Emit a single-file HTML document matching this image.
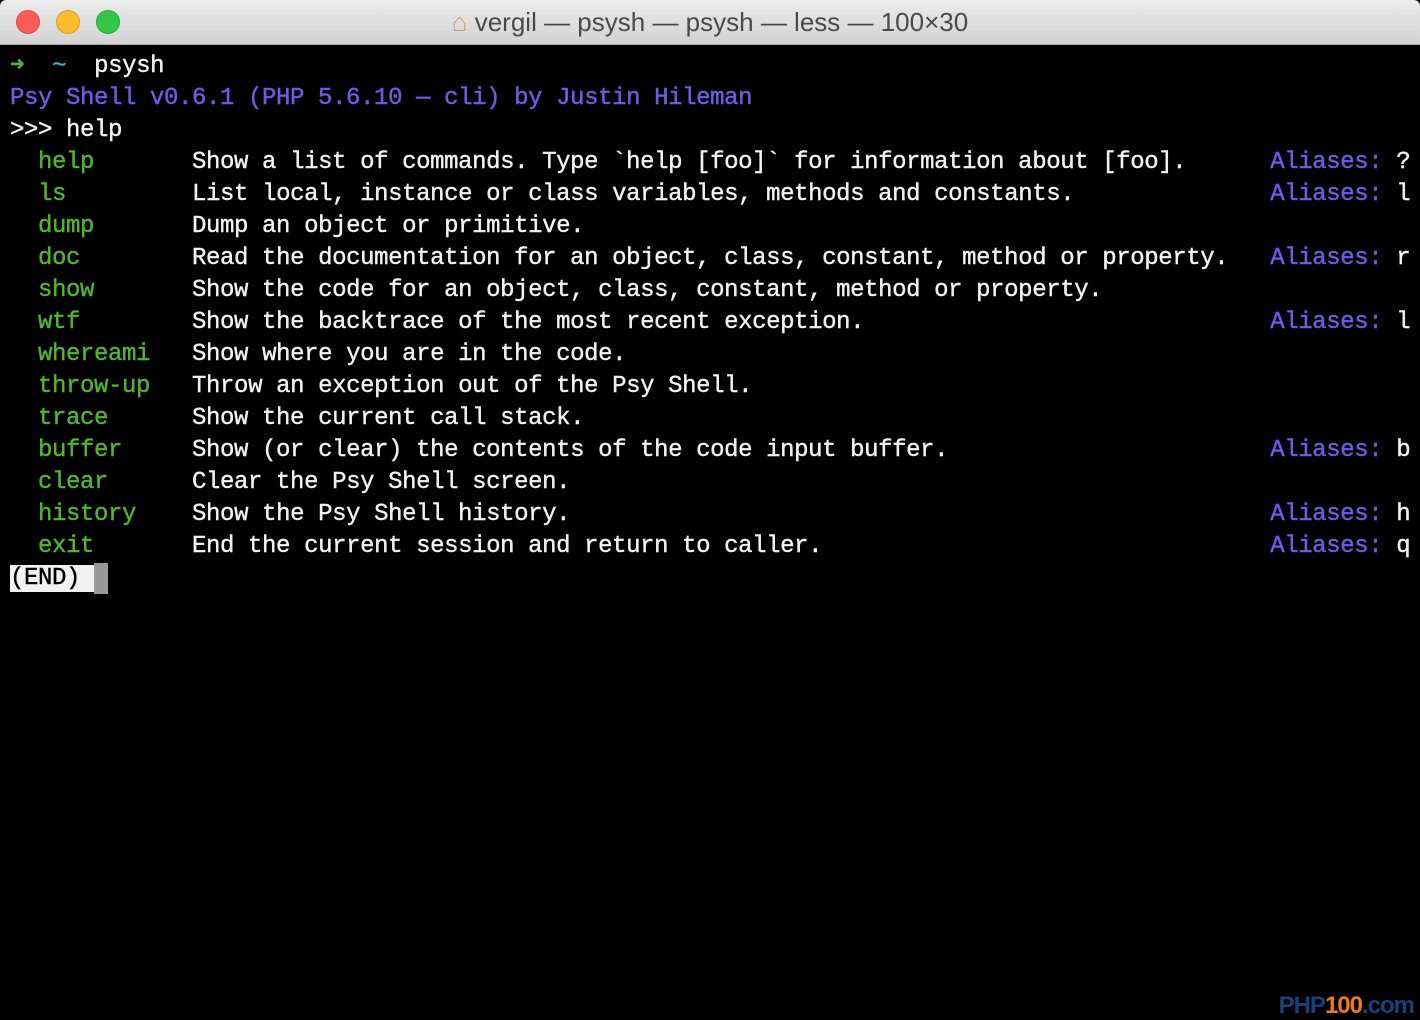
<!DOCTYPE html>
<html><head><meta charset="utf-8"><style>
html,body{margin:0;padding:0;width:1420px;height:1020px;overflow:hidden;background:#000}
.tb{position:absolute;left:0;top:0;width:1420px;height:44px;background:linear-gradient(#ebebeb,#d3d3d3);border-bottom:1px solid #a8a8a8;border-radius:6px 6px 0 0}
.dot{position:absolute;top:10px;width:22px;height:22px;border-radius:50%}
.title{position:absolute;top:7px;left:0;width:1420px;text-align:center;font:26px "Liberation Sans",sans-serif;color:#4a4a4a}
pre{position:absolute;left:10px;top:51px;margin:0;font:24px/32px "Liberation Mono",monospace;letter-spacing:-0.4px;color:#f2f2f2;-webkit-text-stroke:0.4px}
.g{color:#52b52f}.p{color:#6b5ee6}.c{color:#3fb7c0}
.end{background:#f2f2f2;color:#000}
.cur{display:inline-block;width:14px;height:31px;background:#999;vertical-align:top}
.logo{position:absolute;right:6px;bottom:0px;font:bold 24px "Liberation Sans",sans-serif;color:#1c3f7a;letter-spacing:-1px}
</style></head><body>
<div class="tb">
<div class="dot" style="left:16px;background:#fc5b57;border:1px solid #de4a44"></div>
<div class="dot" style="left:56px;background:#fdbc2e;border:1px solid #dfa123"></div>
<div class="dot" style="left:96px;background:#33c748;border:1px solid #27aa35"></div>
<div class="title"><span style="color:#c9a070">⌂</span> vergil — psysh — psysh — less — 100×30</div>
</div>
<pre><span class="g" style="font-weight:bold">➜</span>  <span class="c">~</span>  psysh
<span class="p">Psy Shell v0.6.1 (PHP 5.6.10 — cli) by Justin Hileman</span>
&gt;&gt;&gt; help
  <span class="g">help</span>       Show a list of commands. Type `help [foo]` for information about [foo].      <span class="p">Aliases:</span> ?
  <span class="g">ls</span>         List local, instance or class variables, methods and constants.              <span class="p">Aliases:</span> l
  <span class="g">dump</span>       Dump an object or primitive.
  <span class="g">doc</span>        Read the documentation for an object, class, constant, method or property.   <span class="p">Aliases:</span> r
  <span class="g">show</span>       Show the code for an object, class, constant, method or property.
  <span class="g">wtf</span>        Show the backtrace of the most recent exception.                             <span class="p">Aliases:</span> l
  <span class="g">whereami</span>   Show where you are in the code.
  <span class="g">throw-up</span>   Throw an exception out of the Psy Shell.
  <span class="g">trace</span>      Show the current call stack.
  <span class="g">buffer</span>     Show (or clear) the contents of the code input buffer.                       <span class="p">Aliases:</span> b
  <span class="g">clear</span>      Clear the Psy Shell screen.
  <span class="g">history</span>    Show the Psy Shell history.                                                  <span class="p">Aliases:</span> h
  <span class="g">exit</span>       End the current session and return to caller.                                <span class="p">Aliases:</span> q
<span class="end">(END) </span><span class="cur"></span></pre>
<div class="logo">PHP<span style="color:#f07a1a">100</span>.com</div>
</body></html>
